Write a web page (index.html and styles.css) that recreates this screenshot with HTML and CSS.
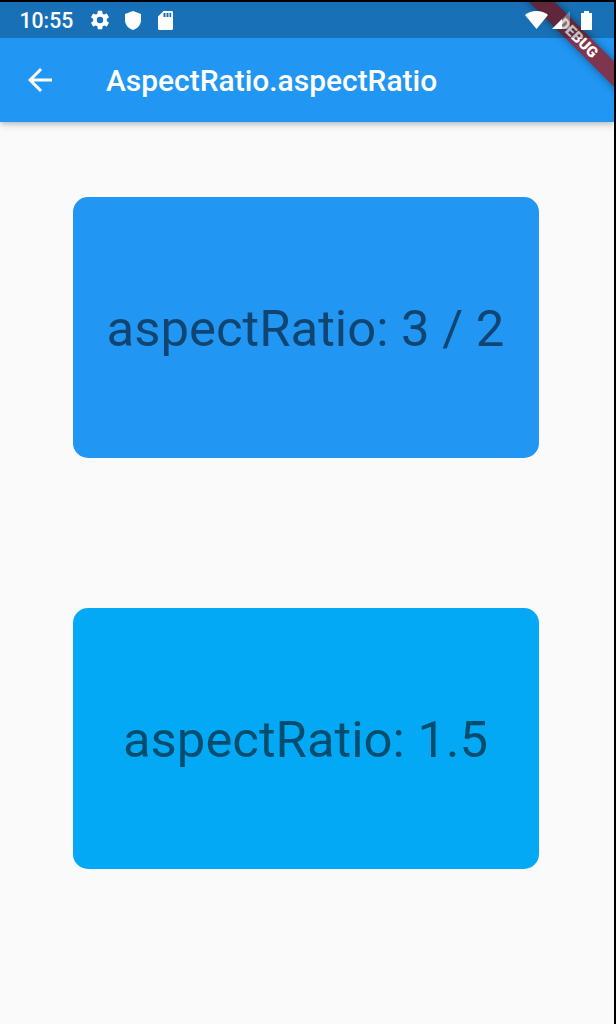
FILE: index.html
```html
<!DOCTYPE html>
<html lang="en">
<head>
<meta charset="utf-8">
<title>AspectRatio.aspectRatio</title>
<link rel="stylesheet" href="styles.css">
</head>
<body>
<div class="screen">
  <header class="header">
    <div class="status">
      <span class="clock">10:55</span>
      <svg class="gear" viewBox="0 0 24 24"><path d="M19.4 13a7.500 7.500 0 0 0 0-2l2.100-1.650c.2-.15.24-.42.12-.64l-2-3.460c-.12-.22-.39-.3-.61-.22l-2.490 1a7.300 7.300 0 0 0-1.690-.98l-.38-2.650A.49.49 0 0 0 14 2h-4c-.25 0-.46.18-.49.42l-.38 2.650c-.61.25-1.170.59-1.690.98l-2.490-1c-.23-.09-.49 0-.61.22l-2 3.460c-.13.22-.07.49.12.64L4.570 11a7.900 7.900 0 0 0 0 2l-2.110 1.650c-.19.15-.24.42-.12.64l2 3.460c.12.22.39.3.61.22l2.490-1c.52.4 1.080.73 1.690.98l.38 2.650c.03.24.24.42.49.42h4c.25 0 .46-.18.49-.42l.38-2.650c.61-.25 1.170-.59 1.690-.98l2.490 1c.23.09.49 0 .61-.22l2-3.460c.12-.22.07-.49-.12-.64zM12 15.500a3.500 3.500 0 1 1 0-7 3.500 3.500 0 0 1 0 7z"/></svg>
      <svg class="shield" viewBox="0 0 16 19"><path d="M8 0 0 3v6c0 4.700 3.300 8.600 8 10 4.700-1.400 8-5.300 8-10V3z"/></svg>
      <svg class="sd" viewBox="0 0 15 19"><path fill-rule="evenodd" d="M5.500 0H13.500c.9 0 1.500.7 1.500 1.500v16c0 .8-.6 1.500-1.500 1.500h-12C.6 19 0 18.300 0 17.500V5.500zM5.500 2v4h2V2zm3 0v4h2V2zm3 0v4h1.700V2z"/></svg>
      <span class="spacer"></span>
      <svg class="wifi" viewBox="0 0 23 18"><path d="M11.500 18 0 4C3 1.500 7 0 11.500 0S20 1.500 23 4z"/></svg>
      <svg class="signal" viewBox="0 0 18 18"><path opacity=".3" d="M0 18 18 0v18z"/><path d="M0 18 10 8v10z"/></svg>
      <svg class="battery" viewBox="0 0 11 19"><path d="M3 0h5v2h3v17H0V2h3z"/></svg>
    </div>
    <div class="bar">
      <svg class="back" viewBox="0 0 24 24"><path d="M20 11H7.830l5.590-5.590L12 4l-8 8 8 8 1.410-1.410L7.830 13H20z"/></svg>
      <h1 class="title">AspectRatio.aspectRatio</h1>
    </div>
    <div class="banner-clip"><div class="banner">DEBUG</div></div>
  </header>
  <main class="content">
    <div class="card blue">aspectRatio: 3 / 2</div>
    <div class="card light">aspectRatio: 1.5</div>
  </main>
</div>
</body>
</html>
```
FILE: styles.css
```css
* { box-sizing: border-box; }
body {
  margin: 0;
  height: 1024px;
  padding: 2px 2px 0 0;
  background: #000;
  font-family: Roboto, "Liberation Sans", sans-serif;
  overflow: hidden;
}
svg { display: block; fill: #fff; flex: none; }
.screen {
  height: 1022px;
  background: #fafafa;
  overflow: hidden;
}
.header {
  position: relative;
  height: 120px;
  background: #2196f3;
  color: #fff;
  box-shadow: 0 2px 5px -1px rgba(0,0,0,.2), 0 4px 7px rgba(0,0,0,.08), 0 1px 12px rgba(0,0,0,.06);
}
.status {
  position: relative;
  z-index: 2;
  display: flex;
  align-items: center;
  height: 36px;
  padding: 0 22px 0 19.5px;
  background: rgba(0,0,0,.25);
}
.clock {
  width: 70px;
  padding-top: 2px;
  font-size: 21.2px;
  font-weight: 500;
  line-height: 24px;
}
.gear { width: 22px; height: 22px; margin-left: -1px; }
.shield { width: 16px; height: 19px; margin-left: 14px; }
.sd { width: 15px; height: 19px; margin-left: 17.5px; }
.spacer { flex: 1; }
.wifi { width: 23px; height: 18px; }
.signal { width: 18px; height: 18px; margin: 0 0 0 4px; }
.battery { width: 11px; height: 19px; margin: 0 0 0 11px; }
.bar {
  display: flex;
  align-items: center;
  height: 84px;
  padding-left: 22px;
}
.back { width: 36px; height: 36px; }
.title {
  margin: 2px 0 0 48px;
  font-size: 29.95px;
  font-weight: 500;
  line-height: 36px;
  white-space: nowrap;
}
.banner-clip {
  position: absolute;
  z-index: 1;
  top: 0;
  right: 0;
  width: 120px;
  height: 120px;
  overflow: hidden;
}
.banner {
  position: absolute;
  top: 41.8px;
  left: 20px;
  width: 200px;
  height: 18px;
  transform-origin: 100px -41.8px;
  transform: rotate(45deg);
  background: rgba(139,42,60,.9);
  box-shadow: 0 0 9px rgba(0,0,0,.4);
  font-size: 15.2px;
  font-weight: 900;
  line-height: 18px;
  text-align: center;
}
.content {
  display: flex;
  flex-direction: column;
  align-items: center;
  gap: 150px;
  padding: 75px 2px 0 0;
}
.card {
  display: flex;
  align-items: center;
  justify-content: center;
  width: 466px;
  height: 261px;
  padding: 2px 1px 0 0;
  border-radius: 15px;
  color: rgba(0,0,0,.54);
  font-size: 50.85px;
  white-space: nowrap;
}
.blue { background: #2196f3; }
.light { background: #03a9f4; }
```
